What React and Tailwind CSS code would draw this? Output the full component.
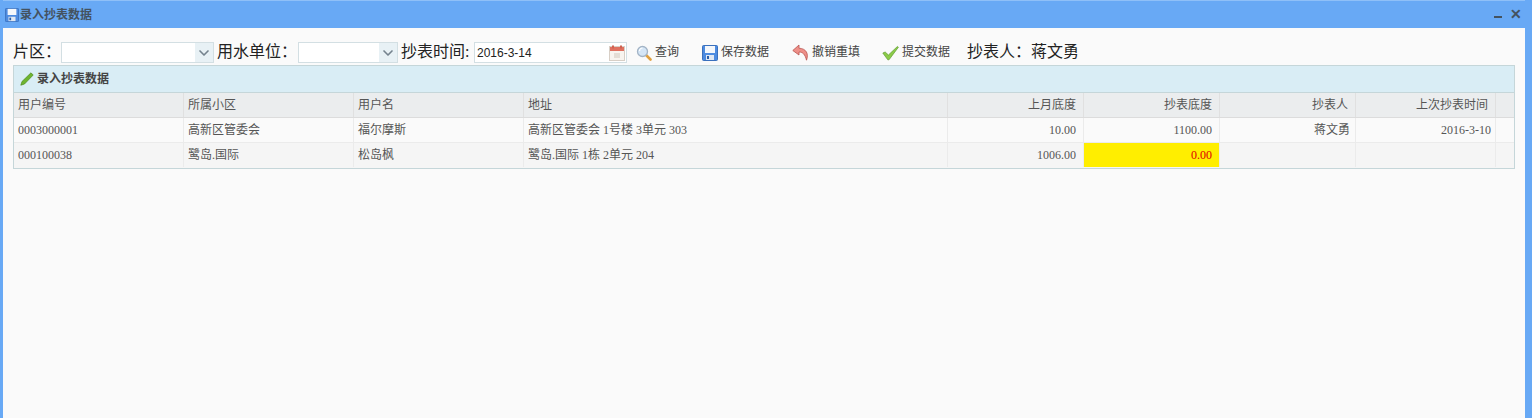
import React from "react";
import { ChevronDown } from "lucide-react";

const cjk = "font-['Liberation_Serif','Noto_Sans_CJK_SC',serif]";
const columns = [
  { name: "用户编号", w: "w-[170px]" },
  { name: "所属小区", w: "w-[170px]" },
  { name: "用户名", w: "w-[170px]" },
  { name: "地址", w: "w-[424px]" },
  { name: "上月底度", w: "w-[136px]", right: true, cell: "justify-end pr-[7px]" },
  { name: "抄表底度", w: "w-[136px]", right: true, cell: "justify-end pr-[7px]" },
  { name: "抄表人", w: "w-[136px]", right: true, cell: "justify-end pr-[5px]" },
  { name: "上次抄表时间", w: "w-[140px]", right: true, cell: "justify-end pr-[4px]" },
];
const rows = [
  ["0003000001", "高新区管委会", "福尔摩斯", "高新区管委会 1号楼 3单元 303", "10.00", "1100.00", "蒋文勇", "2016-3-10"],
  ["000100038", "鹭岛.国际", "松岛枫", "鹭岛.国际 1栋 2单元 204", "1006.00", "0.00", "", ""],
];

function SaveIcon({ size = 16 }) {
  return (
    <svg width={size} height={size} viewBox="0 0 16 16">
      <rect x="0.5" y="0.5" width="15" height="15" rx="1" fill="#4d8be0" stroke="#3a70bd" />
      <rect x="3" y="1" width="10" height="7" fill="#f4f7fb" />
      <rect x="4" y="10" width="8" height="5" fill="#dfe7f2" />
      <rect x="5" y="11" width="2" height="3" fill="#2a5ea8" />
    </svg>
  );
}

function SearchIcon() {
  return (
    <svg width="16" height="16" viewBox="0 0 16 16">
      <line x1="10" y1="10" x2="14.5" y2="14.5" stroke="#e0a040" strokeWidth="2.6" strokeLinecap="round" />
      <circle cx="6.5" cy="6.5" r="5" fill="#d5e6f7" stroke="#a3b4c6" strokeWidth="1.3" />
      <path d="M3.5 6a3 3 0 0 1 3-3" fill="none" stroke="#fff" strokeWidth="1.2" />
    </svg>
  );
}

function UndoIcon() {
  return (
    <svg width="17" height="17" viewBox="0 0 17 17">
      <path d="M7 1 L0.8 6.5 L7 11 L7 8 C10.5 8 13 10 14.5 16.2 C16.8 10 14.5 4.6 7 4.2 Z" fill="#ee8f88" stroke="#b9534e" strokeWidth="0.8" strokeLinejoin="round" />
    </svg>
  );
}

function CheckIcon() {
  return (
    <svg width="17" height="16" viewBox="0 0 17 16">
      <path d="M0.8 8 L3.2 7 L6.4 10 L15.4 1.5 L16.4 2.2 L7 14.8 L5.8 14.8 Z" fill="#8ccb48" stroke="#5f9c30" strokeWidth="0.7" strokeLinejoin="round" />
    </svg>
  );
}

function PencilIcon() {
  return (
    <svg width="14" height="14" viewBox="0 0 14 14">
      <path d="M11 0.8 L13.2 3 L4.5 12 L0.8 13.2 L2 9.5 Z" fill="#6fb52f" stroke="#4a8a1e" strokeWidth="0.7" strokeLinejoin="round" />
    </svg>
  );
}

function CalendarIcon() {
  return (
    <svg width="16" height="16" viewBox="0 0 16 16">
      <rect x="0.5" y="1.5" width="15" height="14" fill="#f8f4ef" stroke="#d8cfc6" />
      <rect x="1" y="2" width="14" height="4" fill="#e0705f" />
      <rect x="3" y="0.5" width="2" height="3" fill="#cf6252" />
      <rect x="11" y="0.5" width="2" height="3" fill="#cf6252" />
      <rect x="5" y="8" width="6" height="5" fill="#e4ddd5" />
    </svg>
  );
}

function Combo({ width }) {
  return (
    <div className={`flex h-[21px] items-stretch border border-[#d3dfe3] bg-white ${width}`}>
      <div className="flex-1" />
      <div className="flex w-[18px] items-center justify-center bg-[#e8f1f5]">
        <ChevronDown size={16} strokeWidth={2.5} className="text-[#75838e]" />
      </div>
    </div>
  );
}

function ToolButton({ icon, label, width }) {
  return (
    <div className={`flex items-center gap-[3px] text-xs leading-none text-[#444] ${width}`}>
      {icon}
      <span className="-mt-[1px]">{label}</span>
    </div>
  );
}

export default function App() {
  return (
    <div className={`flex h-[418px] w-[1532px] flex-col overflow-hidden bg-[#68a9f5] pl-[3px] pr-[7px] ${cjk}`}>
      <div className="flex h-[28px] shrink-0 items-center border-t border-[#8fc0f8] pr-[3px]">
        <div className="ml-[2px] mr-[1px]"><SaveIcon size={14} /></div>
        <span className="text-xs font-bold text-[#44525f]">录入抄表数据</span>
        <div className="ml-auto flex items-center gap-[8px] text-[#44525f]">
          <div className="mt-[5px] h-[2px] w-[8px] bg-[#44525f]" />
          <span className="text-sm font-bold leading-none">✕</span>
        </div>
      </div>

      <div className="flex flex-1 flex-col bg-[#fafafa] px-[10px]">
        <div className="flex h-[37px] shrink-0 items-end pb-[2px] text-base text-[#222]">
          <span className="flex h-[21px] w-[48px] items-center pb-[2px]">片区：</span>
          <Combo width="w-[153px]" />
          <span className="ml-[3px] flex h-[21px] w-[81px] items-center pb-[2px]">用水单位：</span>
          <Combo width="w-[100px]" />
          <span className="ml-[3px] flex h-[21px] w-[73px] items-center pb-[2px]">抄表时间:</span>
          <div className="flex h-[21px] w-[153px] items-center justify-between border border-[#d3dfe3] bg-white pl-[2px] pr-[1px] font-['Liberation_Sans',sans-serif] text-xs text-[#222]">
            2016-3-14
            <CalendarIcon />
          </div>
          <div className="ml-[9px] flex h-[21px] items-center">
            <ToolButton icon={<SearchIcon />} label="查询" width="w-[66px]" />
            <ToolButton icon={<SaveIcon />} label="保存数据" width="w-[90px]" />
            <ToolButton icon={<UndoIcon />} label="撤销重填" width="w-[90px]" />
            <ToolButton icon={<CheckIcon />} label="提交数据" width="w-[85px]" />
            <span className="pb-[2px] text-base text-[#222]">抄表人：蒋文勇</span>
          </div>
        </div>

        <div className="w-[1502px] border border-[#c5d6d9]">
          <div className="flex h-[27px] items-center gap-[3px] border-b border-[#c5d6d9] bg-[#d9edf5] pl-[6px] text-xs font-bold text-[#444]">
            <PencilIcon />
            录入抄表数据
          </div>
          <div className="flex h-[25px] border-b border-[#dcdcdc] bg-[#ebedee]">
            {columns.map((col) => (
              <div
                key={col.name}
                className={`flex items-center border-r border-[#e0e0e0] px-[4px] text-xs text-[#555] ${col.w} ${col.right ? "justify-end pr-[7px]" : ""}`}
              >
                {col.name}
              </div>
            ))}
          </div>
          {rows.map((row, rowIndex) => (
            <div
              key={row[0]}
              className={`flex h-[25px] ${rowIndex === 0 ? "border-b border-[#ebebeb] bg-[#fafafa]" : "bg-[#f5f5f5] pb-[1px]"}`}
            >
              {row.map((cell, i) => {
                const yellow = rowIndex === 1 && i === 5;
                return (
                  <div
                    key={i}
                    className={`flex items-center border-r border-[#ebebeb] pl-[4px] text-xs ${columns[i].w} ${columns[i].cell || ""} ${yellow ? "bg-[#ffee00] text-[#e00000]" : "text-[#555]"}`}
                  >
                    {cell}
                  </div>
                );
              })}
            </div>
          ))}
        </div>
      </div>
    </div>
  );
}
